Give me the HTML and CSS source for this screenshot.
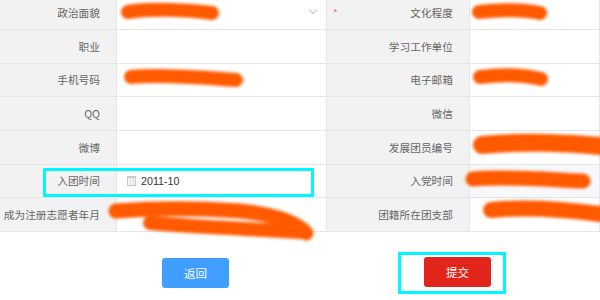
FILE: index.html
```html
<!DOCTYPE html>
<html lang="zh-CN">
<head>
  <meta charset="UTF-8">
  <title>团员信息</title>
  <link rel="stylesheet" href="styles.css">
</head>
<body>
  <div class="form-table">
    <div class="label">政治面貌</div>
    <div class="value"><span class="chevron"></span></div>
    <div class="label"><span class="req">*</span>文化程度</div>
    <div class="value"></div>

    <div class="label">职业</div>
    <div class="value"></div>
    <div class="label">学习工作单位</div>
    <div class="value"></div>

    <div class="label">手机号码</div>
    <div class="value"></div>
    <div class="label">电子邮箱</div>
    <div class="value"></div>

    <div class="label">QQ</div>
    <div class="value"></div>
    <div class="label">微信</div>
    <div class="value"></div>

    <div class="label">微博</div>
    <div class="value"></div>
    <div class="label">发展团员编号</div>
    <div class="value"></div>

    <div class="label">入团时间</div>
    <div class="value"><span class="cal"></span>2011-10</div>
    <div class="label">入党时间</div>
    <div class="value hover"></div>

    <div class="label">成为注册志愿者年月</div>
    <div class="value"><span class="ghost">1</span></div>
    <div class="label">团籍所在团支部</div>
    <div class="value"></div>
  </div>

  <div class="actions">
    <button class="btn btn-back">返回</button>
    <button class="btn btn-submit">提交</button>
  </div>

  <!-- redaction strokes -->
  <svg class="scribble" width="600" height="300" viewBox="0 0 600 300">
    <defs>
      <filter id="soft"><feGaussianBlur stdDeviation="1.6"/></filter>
    </defs>
    <g stroke="#ff5a00" stroke-linecap="round" fill="none" filter="url(#soft)">
      <path d="M128 12 C150 8 190 10 212 13" stroke-width="14"/>
      <path d="M479 12 C500 9 525 10 540 13" stroke-width="14"/>
      <path d="M131 77 C165 74 205 78 236 80" stroke-width="14"/>
      <path d="M480 77 C505 74 528 76 541 79" stroke-width="14"/>
      <path d="M482 145 C520 141 570 143 600 146" stroke-width="18"/>
      <path d="M473 179 C505 176 555 180 583 181" stroke-width="15"/>
      <path d="M491 210 C530 206 570 210 600 214" stroke-width="16"/>
      <path d="M116 211 C170 207 225 210 240 211 C270 214 295 221 306 233" stroke-width="15"/>
      <path d="M150 223 C200 227 250 229 300 232" stroke-width="14"/>
    </g>
  </svg>

  <div class="mark mark-row"></div>
  <div class="mark mark-btn"></div>
</body>
</html>
```

FILE: styles.css
```css
body {
  margin: 0;
  width: 600px;
  height: 300px;
  overflow: hidden;
  background: #fff;
  font-family: "Noto Sans CJK SC", "Noto Sans", sans-serif;
  color: #666;
  position: relative;
}
.form-table {
  display: grid;
  grid-template-columns: 117px 210px 143px 1fr;
  grid-auto-rows: 33.67px;
  margin-top: -3.67px;
}
.form-table > div {
  box-sizing: border-box;
  border-bottom: 1px solid #e6e6e6;
  display: flex;
  align-items: center;
  font-size: 10.7px;
}
.label {
  background: #f2f2f2;
  justify-content: flex-end;
  padding-right: 16px;
  border-right: 1px solid #e6e6e6;
  position: relative;
}
.value {
  background: #fff;
  border-right: 1px solid #e6e6e6;
  padding-left: 10px;
  color: #333;
  font-family: "Liberation Sans", Arial, sans-serif;
  position: relative;
}
.value.hover {
  background: #f7f8fb;
}
.req {
  position: absolute;
  left: 6px;
  top: 12px;
  color: #f56c6c;
  font-size: 10px;
  line-height: 1;
}
.chevron {
  position: absolute;
  right: 10px;
  top: 11px;
  width: 5px;
  height: 5px;
  border-right: 1px solid #c0c4cc;
  border-bottom: 1px solid #c0c4cc;
  transform: rotate(45deg);
}
.cal {
  width: 7px;
  height: 7px;
  border: 1px solid #c8c8c8;
  border-top-width: 2px;
  background: repeating-linear-gradient(90deg, #f4f4f4 0 2px, #dcdcdc 2px 3px);
  margin-right: 5px;
}
.ghost {
  position: absolute;
  left: 145px;
  color: #999;
}
.actions {
  display: flex;
  gap: 195px;
  padding: 26px 0 0 162px;
}
.btn {
  width: 67px;
  height: 30px;
  border: 0;
  border-radius: 3px;
  color: #fff;
  font-size: 11.5px;
  font-family: "Noto Sans CJK SC", sans-serif;
}
.btn-back {
  background: #409eff;
}
.btn-submit {
  background: #e1251b;
  margin-top: -1px;
}
.scribble {
  position: absolute;
  left: 0;
  top: 0;
  pointer-events: none;
}
.mark {
  position: absolute;
  box-sizing: border-box;
  border: 3px solid #00f7ff;
}
.mark-row {
  left: 43px;
  top: 168px;
  width: 271px;
  height: 29px;
}
.mark-btn {
  left: 398px;
  top: 252px;
  width: 108px;
  height: 42px;
}
```
